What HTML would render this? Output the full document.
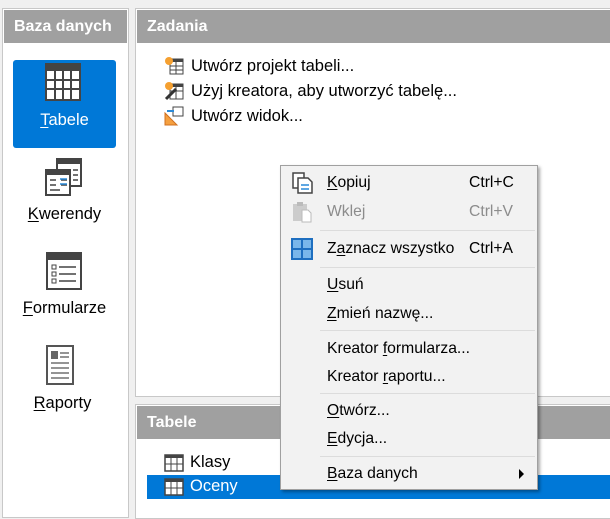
<!DOCTYPE html>
<html><head><meta charset="utf-8"><style>
*{margin:0;padding:0;box-sizing:border-box}
body{width:610px;height:513px;background:#f0f0f0;position:relative;overflow:hidden;font-family:"Liberation Sans",sans-serif;font-size:15.7px;color:#000}
.a{position:absolute}
.panel{position:absolute;background:#fff;border:1px solid #c8c8c8}
.hd{position:absolute;background:#a0a0a0;color:#fff;font-weight:bold;font-size:16px;height:33px;line-height:33px;padding-left:10px}
u{text-decoration:underline;text-underline-offset:2px}
.mi{position:absolute;left:327px;white-space:nowrap}
.sc{position:absolute;left:469px}
.sep{position:absolute;left:320px;width:215px;height:1px;background:#dcdcdc}
.lab{position:absolute;width:115px;text-align:center;left:7px;font-size:16.5px}
.t{font-size:16.5px;white-space:nowrap}
</style></head><body>
<div class="panel" style="left:2px;top:8px;width:127px;height:510px"></div>
<div class="hd" style="left:4px;top:10px;width:123px">Baza danych</div>
<div class="a" style="left:13px;top:60px;width:103px;height:88px;background:#0078d7;border-radius:3px"></div>
<svg class="a" style="left:45px;top:63px" width="36" height="38"><rect x="1" y="1" width="34" height="36" fill="#fff" stroke="#444" stroke-width="2"/><rect x="1" y="1" width="34" height="7" fill="#444"/><path d="M1 17H35M1 26H35M10 8V37M18 8V37M26 8V37" stroke="#444" stroke-width="2"/></svg>
<div class="lab" style="top:111px;color:#fff"><u>T</u>abele</div>
<svg class="a" style="left:45px;top:158px" width="38" height="38"><rect x="12" y="1" width="24" height="27" fill="#fff" stroke="#444" stroke-width="2"/><rect x="12" y="1" width="24" height="5" fill="#444"/><rect x="1" y="12" width="24" height="25" fill="#fff" stroke="#444" stroke-width="2"/><rect x="1" y="12" width="24" height="5" fill="#444"/><path d="M5 22h6M5 27h6M5 32h10M16 22h6M16 27h6" stroke="#444" stroke-width="1.5"/><path d="M28 12h5M28 17h5M28 22h5" stroke="#444" stroke-width="1.5"/><path d="M15 21h7M15 26h7" stroke="#2a8ad8" stroke-width="1.5"/></svg>
<div class="lab" style="top:205px"><u>K</u>werendy</div>
<svg class="a" style="left:46px;top:252px" width="36" height="38"><rect x="1" y="1" width="34" height="36" fill="#fff" stroke="#444" stroke-width="2"/><rect x="1" y="1" width="34" height="7" fill="#444"/><rect x="6" y="13" width="4" height="4" fill="none" stroke="#444"/><rect x="6" y="20" width="4" height="4" fill="none" stroke="#444"/><rect x="6" y="27" width="4" height="4" fill="none" stroke="#444"/><path d="M13 15h17M13 22h17M13 29h17" stroke="#444" stroke-width="1.5"/></svg>
<div class="lab" style="top:299px"><u>F</u>ormularze</div>
<svg class="a" style="left:46px;top:345px" width="28" height="40"><rect x="1" y="1" width="26" height="38" fill="#fff" stroke="#555" stroke-width="2"/><rect x="5" y="6" width="7" height="8" fill="#666"/><path d="M14 8h9M14 12h9M5 18h18M5 23h18M5 28h18M5 33h18" stroke="#555" stroke-width="1.2"/></svg>
<div class="lab" style="top:394px;left:5px"><u>R</u>aporty</div>

<div class="panel" style="left:135px;top:8px;width:480px;height:389px"></div>
<div class="hd" style="left:137px;top:10px;width:475px">Zadania</div>
<svg class="a" style="left:164px;top:56px" width="20" height="20"><rect x="6" y="3" width="13" height="15" fill="#fff" stroke="#444"/><rect x="6" y="3" width="13" height="3" fill="#444"/><path d="M6 10h13M6 14h13M12 6v12" stroke="#444"/><circle cx="5" cy="5" r="4" fill="#f5a030"/></svg>
<div class="a t" style="left:191px;top:57px">Utwórz projekt tabeli...</div>
<svg class="a" style="left:164px;top:81px" width="20" height="20"><rect x="6" y="3" width="13" height="15" fill="#fff" stroke="#444"/><rect x="6" y="3" width="13" height="3" fill="#444"/><path d="M6 10h13M12 6v12" stroke="#444"/><circle cx="5" cy="5" r="4" fill="#f5a030"/><path d="M2 18L12 8" stroke="#333" stroke-width="3"/></svg>
<div class="a t" style="left:191px;top:82px">Użyj kreatora, aby utworzyć tabelę...</div>
<svg class="a" style="left:164px;top:106px" width="20" height="20"><rect x="9" y="1" width="10" height="9" fill="#fff" stroke="#444"/><path d="M3 5h7" stroke="#2a8ad8" stroke-width="2"/><path d="M1 19V7L13 19Z" fill="#f5a040" stroke="#d07020"/></svg>
<div class="a t" style="left:191px;top:107px">Utwórz widok...</div>

<div class="panel" style="left:135px;top:404px;width:480px;height:115px"></div>
<div class="hd" style="left:137px;top:406px;width:475px">Tabele</div>
<svg class="a" style="left:164px;top:454px" width="20" height="18"><rect x="1" y="1" width="18" height="16" fill="#fff" stroke="#444" stroke-width="1.5"/><rect x="1" y="1" width="18" height="3" fill="#444"/><path d="M1 10h18M7 4v13M13 4v13" stroke="#444"/></svg>
<div class="a t" style="left:190px;top:453px">Klasy</div>
<div class="a" style="left:147px;top:475px;width:470px;height:24px;background:#0078d7"></div>
<svg class="a" style="left:164px;top:478px" width="20" height="18"><rect x="1" y="1" width="18" height="16" fill="#fff" stroke="#444" stroke-width="1.5"/><rect x="1" y="1" width="18" height="3" fill="#444"/><path d="M1 10h18M7 4v13M13 4v13" stroke="#444"/></svg>
<div class="a t" style="left:190px;top:477px;color:#fff">Oceny</div>

<div class="a" style="left:280px;top:165px;width:258px;height:325px;background:#f2f2f2;border:1px solid #a0a0a0;box-shadow:2px 2px 3px rgba(0,0,0,.35)"></div>
<svg class="a" style="left:291px;top:172px" width="22" height="22"><rect x="2" y="1" width="11" height="15" fill="#fff" stroke="#444" stroke-width="1.5"/><path d="M7 6h10l4 4v11H7Z" fill="#fff" stroke="#444" stroke-width="1.5"/><path d="M10 13h8M10 17h8" stroke="#2a8ad8" stroke-width="1.5"/></svg>
<div class="mi" style="top:174px"><u>K</u>opiuj</div><div class="sc" style="top:174px">Ctrl+C</div>
<svg class="a" style="left:291px;top:201px" width="22" height="22"><rect x="2" y="3" width="14" height="17" fill="#ccc"/><rect x="6" y="1" width="6" height="4" fill="#bbb"/><path d="M11 9h6l3 3v9h-9Z" fill="#fff" stroke="#bbb"/></svg>
<div class="mi" style="top:203px;color:#8c8c8c">Wkle<u>j</u></div><div class="sc" style="top:203px;color:#8c8c8c">Ctrl+V</div>
<div class="sep" style="top:230px"></div>
<svg class="a" style="left:291px;top:238px" width="22" height="22"><rect x="0" y="0" width="22" height="22" fill="#1e6fc0"/><rect x="2" y="2" width="8" height="8" fill="#7ab7ea"/><rect x="12" y="2" width="8" height="8" fill="#7ab7ea"/><rect x="2" y="12" width="8" height="8" fill="#7ab7ea"/><rect x="12" y="12" width="8" height="8" fill="#7ab7ea"/></svg>
<div class="mi" style="top:240px">Z<u>a</u>znacz wszystko</div><div class="sc" style="top:240px">Ctrl+A</div>
<div class="sep" style="top:267px"></div>
<div class="mi" style="top:276px"><u>U</u>suń</div>
<div class="mi" style="top:305px"><u>Z</u>mień nazwę...</div>
<div class="sep" style="top:330px"></div>
<div class="mi" style="top:340px">Kreator <u>f</u>ormularza...</div>
<div class="mi" style="top:368px">Kreator <u>r</u>aportu...</div>
<div class="sep" style="top:393px"></div>
<div class="mi" style="top:402px"><u>O</u>twórz...</div>
<div class="mi" style="top:430px"><u>E</u>dycja...</div>
<div class="sep" style="top:456px"></div>
<div class="mi" style="top:465px"><u>B</u>aza danych</div>
<svg class="a" style="left:519px;top:469px" width="6" height="10"><path d="M0 0L5 5L0 10Z" fill="#000"/></svg>
</body></html>
